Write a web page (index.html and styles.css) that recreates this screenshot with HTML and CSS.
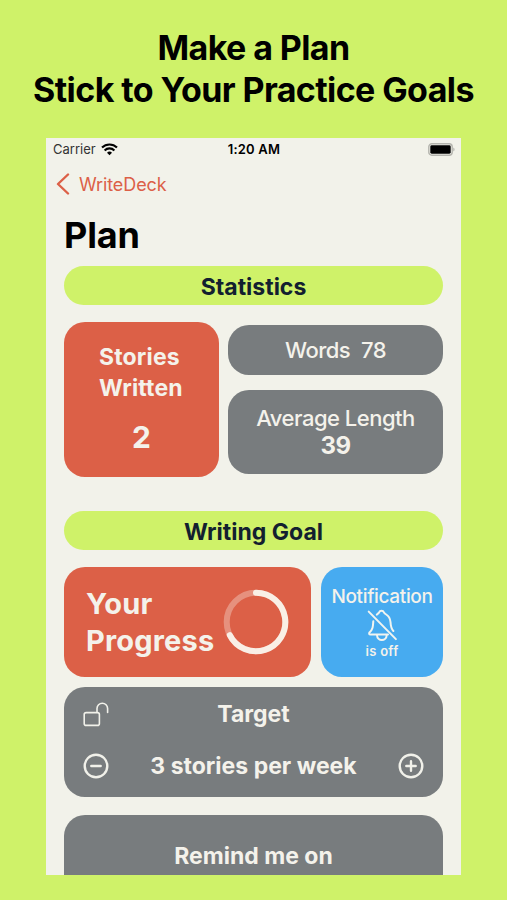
FILE: index.html
```html
<!DOCTYPE html>
<html lang="en">
<head>
  <meta charset="UTF-8">
  <meta name="viewport" content="width=device-width, initial-scale=1.0">
  <title>WriteDeck - Plan</title>
  <link rel="stylesheet" href="styles.css">
</head>
<body>
  <header class="headline">
    <h1>Make a Plan<br>Stick to Your Practice Goals</h1>
  </header>
  <main class="phone">
    <div class="status-bar">
      <div class="carrier">
        <span>Carrier</span>
        <svg width="17" height="13" viewBox="0 0 17 13" fill="none" stroke="#000" stroke-width="2.1">
          <path d="M1 4.6a10.7 10.7 0 0 1 15 0"/>
          <path d="M3.6 7.4a7 7 0 0 1 9.8 0"/>
          <path d="M8.5 12.2L6 9.7a3.6 3.6 0 0 1 5 0z" fill="#000" stroke="none"/>
        </svg>
      </div>
      <span class="time">1:20 AM</span>
      <svg class="battery" width="27" height="13" viewBox="0 0 27 13">
        <rect x="0.8" y="0.8" width="23.4" height="11.4" rx="3" fill="none" stroke="#b4b4ae" stroke-width="1.4"/>
        <rect x="2.3" y="2.3" width="20.4" height="8.4" rx="1.4" fill="#000"/>
        <path d="M25.3 4.6v4a2.2 2.2 0 0 0 0-4z" fill="#b4b4ae"/>
      </svg>
    </div>
    <nav class="nav-bar">
      <svg width="14" height="22" viewBox="0 0 14 22" fill="none" stroke="#dc6047" stroke-width="2.4" stroke-linecap="round" stroke-linejoin="round">
        <path d="M12 1.5L2 11l10 9.5"/>
      </svg>
      <a class="back">WriteDeck</a>
    </nav>
    <h2 class="page-title">Plan</h2>

    <h3 class="section-title">Statistics</h3>
    <div class="stats">
      <div class="card red stories">
        <div class="stories-label">Stories<br>Written</div>
        <div class="stories-count">2</div>
      </div>
      <div class="stats-side">
        <div class="card gray words">Words&nbsp; 78</div>
        <div class="card gray average">
          <span>Average Length</span>
          <strong>39</strong>
        </div>
      </div>
    </div>

    <h3 class="section-title goal-title">Writing Goal</h3>
    <div class="goal">
      <div class="card red progress">
        <div class="progress-label">Your<br>Progress</div>
        <svg width="66" height="66" viewBox="0 0 66 66" fill="none" stroke="#f9efe6" stroke-width="6">
          <circle cx="33" cy="33" r="29.3" stroke-opacity="0.35"/>
          <path d="M33 3.7a29.3 29.3 0 1 1-26.2 42.4" stroke-linecap="round"/>
        </svg>
      </div>
      <div class="card blue notification">
        <span class="notification-label">Notification</span>
        <svg width="32" height="33" viewBox="0 0 32 33" fill="none" stroke="#f1f4f0" stroke-width="2" stroke-linecap="round" stroke-linejoin="round">
          <path d="M10.8 5.6C12 4.7 12.7 4.2 13.2 3.2C13.9 1.2 17.1 1.2 17.8 3.2C18.2 4.2 19 4.8 20.2 5.5C23 7.2 24.2 9.8 24.5 13C24.7 17 25 19.5 27.4 22"/>
          <path d="M7.3 12.3C7 18 6.8 20.3 3.7 23.2C2.7 24.4 3 25.6 4.6 25.6H22"/>
          <path d="M11 26c.2 6.8 9.5 6.8 9.7 0"/>
          <path d="M2.7 2.6l27.2 27.5"/>
        </svg>
        <span class="notification-state">is off</span>
      </div>
    </div>

    <div class="card gray target">
      <div class="target-row">
        <svg width="26" height="25" viewBox="0 0 26 25" fill="none" stroke="#f1f1ea" stroke-width="1.6" stroke-linecap="round">
          <rect x="1.2" y="10.6" width="15.2" height="12.8" rx="2"/>
          <path d="M14 10.3V6.5a5.3 5.3 0 0 1 10.6 0v4"/>
        </svg>
        <span class="target-label">Target</span>
        <span class="spacer"></span>
      </div>
      <div class="target-row">
        <svg width="26" height="26" viewBox="0 0 26 26" fill="none" stroke="#f1f1ea" stroke-width="2.4" stroke-linecap="round">
          <circle cx="13" cy="13" r="11.3"/>
          <path d="M8.3 13h9.4"/>
        </svg>
        <span class="target-value">3 stories per week</span>
        <svg width="26" height="26" viewBox="0 0 26 26" fill="none" stroke="#f1f1ea" stroke-width="2.4" stroke-linecap="round">
          <circle cx="13" cy="13" r="11.3"/>
          <path d="M8.3 13h9.4M13 8.3v9.4"/>
        </svg>
      </div>
    </div>
    <div class="card gray remind">Remind me on</div>
  </main>
</body>
</html>
```
FILE: styles.css
```css
* {
  box-sizing: border-box;
}
body {
  font-family: Inter, "Liberation Sans", sans-serif;
  margin: 0;
  height: 900px;
  overflow: hidden;
  background-color: #cff269;
  color: #000;
}
h1, h2, h3 {
  margin: 0;
}
svg {
  display: block;
  flex: none;
}
.headline {
  height: 138px;
  padding-top: 27px;
  text-align: center;
  white-space: nowrap;
}
.headline h1 {
  font-size: 34px;
  font-weight: 650;
  line-height: 42px;
  letter-spacing: -0.6px;
}
.phone {
  width: 415px;
  height: 737px;
  margin-left: 46px;
  padding: 0 18px;
  background-color: #f2f2ea;
  overflow: hidden;
}
.status-bar {
  display: grid;
  grid-template-columns: 1fr auto 1fr;
  align-items: center;
  height: 22px;
  margin: 0 -12px 0 -11px;
  font-size: 13px;
}
.carrier {
  display: flex;
  align-items: center;
  gap: 5px;
  color: #333;
}
.time {
  font-weight: 600;
  letter-spacing: 0.2px;
}
.battery {
  justify-self: end;
}
.nav-bar {
  display: flex;
  align-items: center;
  gap: 9px;
  height: 48px;
  margin-left: -8px;
  color: #dc6047;
  font-size: 18px;
  letter-spacing: -0.1px;
}
.page-title {
  height: 58px;
  font-size: 36px;
  font-weight: 700;
  line-height: 55px;
  letter-spacing: -0.2px;
}
.section-title {
  height: 39px;
  border-radius: 20px;
  background-color: #cff269;
  color: #12202f;
  font-size: 23px;
  font-weight: 700;
  line-height: 42px;
  text-align: center;
}
.card {
  border-radius: 21px;
  color: #f4f2eb;
}
.red {
  background-color: #dc6047;
}
.gray {
  background-color: #787c7e;
}
.blue {
  background-color: #47abf0;
}
.stats {
  display: flex;
  gap: 9px;
  margin-top: 17px;
}
.stories {
  width: 155px;
  height: 155px;
  padding-top: 20px;
  font-weight: 700;
}
.stories-label {
  padding-left: 35px;
  font-size: 23px;
  line-height: 31px;
  letter-spacing: 0.15px;
}
.stories-count {
  margin-top: 13px;
  font-size: 30px;
  line-height: 40px;
  text-align: center;
}
.stats-side {
  flex: 1;
  padding-top: 3px;
  font-size: 22px;
  font-weight: 500;
  letter-spacing: -0.5px;
}
.words {
  height: 50px;
  line-height: 51px;
  text-align: center;
}
.average {
  display: flex;
  flex-direction: column;
  align-items: center;
  height: 84px;
  margin-top: 15px;
  padding-top: 14px;
  line-height: 28px;
}
.average strong {
  font-size: 24px;
  font-weight: 700;
}
.goal-title {
  margin-top: 34px;
}
.goal {
  display: flex;
  gap: 10px;
  margin-top: 17px;
}
.progress {
  display: flex;
  align-items: center;
  justify-content: space-between;
  width: 247px;
  height: 110px;
  padding: 0 22px;
}
.progress-label {
  width: 130px;
  font-size: 29px;
  font-weight: 700;
  line-height: 37px;
  letter-spacing: 0.2px;
}
.notification {
  display: flex;
  flex-direction: column;
  align-items: center;
  width: 122px;
  height: 110px;
  padding-top: 18px;
}
.notification-label {
  font-size: 19px;
  font-weight: 500;
  line-height: 24px;
  letter-spacing: -0.35px;
}
.notification-state {
  font-size: 13px;
  font-weight: 600;
  line-height: 18px;
  letter-spacing: 0.3px;
}
.target {
  height: 110px;
  margin-top: 10px;
  padding: 1px 19px 0;
  font-size: 23px;
  font-weight: 700;
}
.target-row {
  display: flex;
  align-items: center;
  justify-content: space-between;
  height: 52px;
}
.spacer {
  width: 26px;
}
.remind {
  height: 110px;
  margin-top: 18px;
  padding-top: 25px;
  font-size: 23px;
  font-weight: 700;
  line-height: 32px;
  text-align: center;
}
```
